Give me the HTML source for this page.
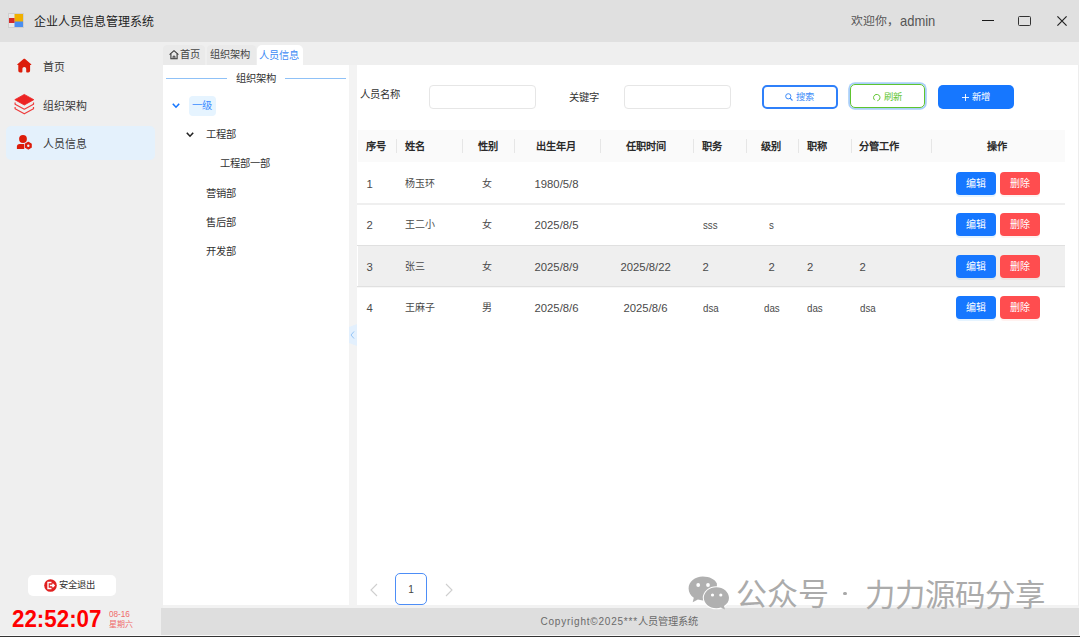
<!DOCTYPE html>
<html lang="zh-CN"><head><meta charset="utf-8">
<style>
*{box-sizing:border-box;margin:0;padding:0}
html,body{width:1080px;height:637px;overflow:hidden}
body{position:relative;background:#efefef;font-family:"Liberation Sans",sans-serif;color:#333}
.a{position:absolute;white-space:nowrap}
#title{left:0;top:0;width:1080px;height:42px;background:#e0e0e0}
.t{line-height:1}
/* nav */
.nav{font-size:10.9px;color:#3a3a3a}
/* tabs */
.tab{top:45px;height:19.5px;background:#eaeaea;border-radius:4px 4px 0 0;font-size:10.2px;color:#444;line-height:19px}
.panel{background:#fff}
.th{font-size:10.2px;font-weight:bold;color:#2a2a2a;top:140.7px;line-height:12px}
.sep{top:139px;width:1px;height:13.5px;background:#e6e6e6}
.td{font-size:11.3px;color:#4a4a4a;line-height:12px}
.td i{font-style:normal;font-size:10px;position:relative;top:-0.7px}
.hline{height:1px;background:#ececec;left:357px;width:708px}
.btn{width:39.5px;height:23px;border-radius:4px;color:#fff;font-size:10px;line-height:23px;text-align:center}
.be{background:#1677ff;left:956px;box-shadow:0 2px 0 rgba(5,145,255,0.1)}
.bd{background:#ff4d4f;left:1000px;box-shadow:0 2px 0 rgba(255,38,5,0.06)}
.tree{font-size:10.3px;color:#333;line-height:12px}
</style></head><body>
<!-- title bar -->
<div class="a" id="title"></div>
<svg class="a" style="left:8px;top:13px" width="16" height="15" viewBox="0 0 16 15">
  <rect x="0.5" y="0.5" width="15" height="14" fill="#e8e8e8" stroke="#cfcfcf" stroke-width="1"/>
  <rect x="6.5" y="1" width="8.5" height="8" fill="#f0b000"/>
  <rect x="6.5" y="8.5" width="8.5" height="5.5" fill="#4a8ef0"/>
  <rect x="1" y="5" width="5.5" height="5" fill="#d42a2a"/>
</svg>
<div class="a t" style="left:34px;top:16px;font-size:12px;color:#222">企业人员信息管理系统</div>
<div class="a t" style="left:850.5px;top:16px;font-size:11.9px;color:#555">欢迎你，</div><div class="a t" style="left:899.5px;top:13.6px;font-size:14.4px;color:#555;transform:scaleX(0.9);transform-origin:0 0">admin</div>
<div class="a" style="left:981.7px;top:19.9px;width:12.2px;height:1.3px;background:#1a1a1a"></div>
<div class="a" style="left:1018.3px;top:15.7px;width:12.6px;height:10.3px;border:1.3px solid #333;border-radius:1.5px"></div>
<svg class="a" style="left:1056.5px;top:16px" width="10" height="10" viewBox="0 0 10 10"><path d="M0.4 0.4L9.6 9.6M9.6 0.4L0.4 9.6" stroke="#222" stroke-width="1.2"/></svg>

<!-- sidebar nav -->
<div class="a" style="left:6px;top:126px;width:149px;height:33.5px;background:#e4f1fc;border-radius:5px"></div>
<svg class="a" style="left:12px;top:54px" width="26" height="24" viewBox="0 0 26 24"><path d="M12.3 4.7C12.6 4.7 12.9 4.8 13.1 5L19.2 10.3C19.5 10.6 19.3 11 18.9 11H18.1V16.6C18.1 17.8 17.4 18.5 16.3 18.5H15.3C14.6 18.5 14.2 18.1 14.2 17.4V15.1C14.2 13.9 13.4 13.1 12.3 13.1C11.2 13.1 10.4 13.9 10.4 15.1V17.4C10.4 18.1 10 18.5 9.3 18.5H8.1C7 18.5 6.3 17.8 6.3 16.6V11H5.7C5.3 11 5.1 10.6 5.4 10.3L11.5 5C11.7 4.8 12 4.7 12.3 4.7Z" fill="#dc1d0b"/></svg>
<div class="a t nav" style="left:42.5px;top:61.7px">首页</div>
<svg class="a" style="left:12px;top:90px" width="26" height="28" viewBox="0 0 26 28"><path d="M12.3 4.4L21.8 9.7L12.3 15L2.8 9.7Z" fill="#ec2323" stroke="#ec2323" stroke-width="0.8" stroke-linejoin="round"/><path d="M3.1 12.4V14.2L12.3 19.2L21.5 14.2V12.4" fill="none" stroke="#ee3b3b" stroke-width="1.2" stroke-linejoin="round"/><path d="M3.1 17V18.8L12.3 23.8L21.5 18.8V17" fill="none" stroke="#ee3b3b" stroke-width="1.2" stroke-linejoin="round"/></svg>
<div class="a t nav" style="left:42.5px;top:100.7px">组织架构</div>
<svg class="a" style="left:12px;top:130px" width="26" height="25" viewBox="0 0 26 25"><circle cx="11" cy="9" r="3.9" fill="#dc1d0b"/><path d="M4.9 19V16.6C4.9 15 6 14.1 7.6 14.1H12.2V19Z" fill="#dc1d0b"/><path d="M16.3 12.3L19.2 14V17.4L16.3 19.1L13.4 17.4V14Z" fill="#dc1d0b" stroke="#dc1d0b" stroke-width="1.1" stroke-linejoin="round"/><circle cx="16.3" cy="15.7" r="1.2" fill="#e6f2fd"/></svg>
<div class="a t nav" style="left:42.5px;top:138.7px">人员信息</div>

<!-- logout & clock -->
<div class="a" style="left:28px;top:575px;width:88px;height:21px;background:#fff;border-radius:5px"></div>
<svg class="a" style="left:44px;top:579px" width="13" height="13" viewBox="0 0 13 13"><circle cx="6.5" cy="6.5" r="6.3" fill="#e02020"/><path d="M7.5 3.5H4V9.5H7.5" fill="none" stroke="#fff" stroke-width="1.4"/><path d="M5.8 6.5H10M8.5 4.8L10.2 6.5L8.5 8.2" fill="none" stroke="#fff" stroke-width="1.3"/></svg>
<div class="a t" style="left:58.7px;top:581.3px;font-size:9.3px;color:#333">安全退出</div>
<div class="a t" style="left:12px;top:607px;font-size:24.3px;font-weight:bold;color:#ff0000;transform:scaleX(0.92);transform-origin:0 0">22:52:07</div>
<div class="a t" style="left:109px;top:610.3px;font-size:8.8px;color:#f06a6a;transform:scaleX(0.93);transform-origin:0 0">08-16</div>
<div class="a t" style="left:109px;top:621px;font-size:8px;color:#f06a6a">星期六</div>

<!-- tabs -->
<div class="a tab" style="left:163px;width:41.5px;padding-left:17px">首页</div><svg class="a" style="left:168.8px;top:50px" width="10" height="9.5" viewBox="0 0 10 9.5"><path d="M0.6 4.6L5 0.7L9.4 4.6" fill="none" stroke="#3a3a3a" stroke-width="1.1" stroke-linejoin="round"/><path d="M1.9 3.8V8.8H8.1V3.8" fill="none" stroke="#3a3a3a" stroke-width="1.1"/><path d="M4.1 8.8V6.2H5.9V8.8" fill="none" stroke="#3a3a3a" stroke-width="1"/></svg>
<div class="a tab" style="left:206.5px;width:49px;padding-left:3.5px">组织架构</div>
<div class="a tab" style="left:256.5px;width:46.5px;background:#fff;padding-left:2.2px;color:#3f8cf5;font-size:10.2px;border-radius:5px 5px 0 0"><span style="position:relative;top:0.6px">人员信息</span></div>

<!-- panels -->
<div class="a panel" style="left:163px;top:64.5px;width:186px;height:540.5px"></div>
<div class="a" style="left:349px;top:64.5px;width:8px;height:540.5px;background:#f3f3f3"></div>
<div class="a" style="left:349px;top:324px;width:8px;height:22px;background:#e3f0fd;clip-path:polygon(0 3px,100% 0,100% 100%,0 calc(100% - 3px))"></div>
<svg class="a" style="left:350.3px;top:331px" width="5" height="8" viewBox="0 0 5 8"><path d="M4 0.5L1 4L4 7.5" fill="none" stroke="#8cc0f5" stroke-width="0.9"/></svg>
<div class="a panel" style="left:357px;top:64.5px;width:721px;height:540.5px"></div>

<!-- tree -->
<div class="a" style="left:166px;top:78px;width:61px;height:1px;background:#8fc1f7"></div>
<div class="a" style="left:285px;top:78px;width:61px;height:1px;background:#8fc1f7"></div>
<div class="a t tree" style="left:236px;top:72.5px">组织架构</div>
<svg class="a" style="left:172px;top:102.5px" width="8" height="6" viewBox="0 0 8 6"><path d="M0.8 0.8L4 4.2L7.2 0.8" fill="none" stroke="#1677ff" stroke-width="1.6"/></svg>
<div class="a" style="left:189px;top:95.5px;width:27px;height:20px;background:#e6f4ff;border-radius:4px"></div>
<div class="a t tree" style="left:192px;top:100px;color:#3b8cff">一级</div>
<svg class="a" style="left:186px;top:131.5px" width="8" height="6" viewBox="0 0 8 6"><path d="M0.8 0.8L4 4.2L7.2 0.8" fill="none" stroke="#222" stroke-width="1.6"/></svg>
<div class="a t tree" style="left:206px;top:128.5px">工程部</div>
<div class="a t tree" style="left:220px;top:157.5px">工程部一部</div>
<div class="a t tree" style="left:206px;top:187.5px">营销部</div>
<div class="a t tree" style="left:206px;top:216.5px">售后部</div>
<div class="a t tree" style="left:206px;top:245.5px">开发部</div>

<!-- search form -->
<div class="a t" style="left:360px;top:90px;font-size:10.3px;color:#333">人员名称</div>
<div class="a" style="left:428.5px;top:85px;width:107px;height:23.5px;border:1px solid #e6e6e6;border-radius:4px"></div>
<div class="a t" style="left:569px;top:92.5px;font-size:10.3px;color:#333">关键字</div>
<div class="a" style="left:624px;top:85px;width:107px;height:23.5px;border:1px solid #e6e6e6;border-radius:4px"></div>
<div class="a" style="left:762px;top:84.7px;width:75.5px;height:24.2px;border:2px solid #2f80fa;border-radius:5px"></div><svg class="a" style="left:785px;top:93.3px" width="8" height="8" viewBox="0 0 8 8"><circle cx="3.3" cy="3.3" r="2.6" fill="none" stroke="#3d8bf8" stroke-width="1"/><path d="M5.1 5.1L7.5 7.5" stroke="#3d8bf8" stroke-width="1.1"/></svg><div class="a t" style="left:795.8px;top:93.2px;font-size:9.3px;color:#3d8bf8">搜索</div>
<div class="a" style="left:849.7px;top:84.4px;width:75.5px;height:23.8px;border:1.8px solid #5ec42f;border-radius:5px;box-shadow:0 0 0 1.8px #a9cff9"></div><svg class="a" style="left:872.7px;top:94.3px" width="8" height="8" viewBox="0 0 8 8"><path d="M1.9 6.2A3.2 3.2 0 1 1 4.3 6.75" fill="none" stroke="#5ec42f" stroke-width="1"/></svg><div class="a t" style="left:883.5px;top:93.2px;font-size:9.3px;color:#5ec42f">刷新</div>
<div class="a" style="left:938px;top:84.5px;width:76px;height:24.5px;background:#1677ff;border-radius:5px"></div><svg class="a" style="left:961.5px;top:93.5px" width="7" height="7" viewBox="0 0 7 7"><path d="M3.5 0V7M0 3.5H7" stroke="#fff" stroke-width="0.9"/></svg><div class="a t" style="left:971.8px;top:93.2px;font-size:9.3px;color:#fff">新增</div>

<!-- table -->
<div class="a" style="left:357.5px;top:130px;width:707.5px;height:32px;background:#fafafa"></div>
<div class="a th" style="left:366px">序号</div>
<div class="a sep" style="left:396px"></div>
<div class="a th" style="left:404.5px">姓名</div>
<div class="a sep" style="left:462px"></div>
<div class="a th" style="left:477.5px">性别</div>
<div class="a sep" style="left:514px"></div>
<div class="a th" style="left:535.5px">出生年月</div>
<div class="a sep" style="left:599.5px"></div>
<div class="a th" style="left:626px">任职时间</div>
<div class="a sep" style="left:693px"></div>
<div class="a th" style="left:702px">职务</div>
<div class="a sep" style="left:746px"></div>
<div class="a th" style="left:761px">级别</div>
<div class="a sep" style="left:798px"></div>
<div class="a th" style="left:806.5px">职称</div>
<div class="a sep" style="left:850.5px"></div>
<div class="a th" style="left:858.5px">分管工作</div>
<div class="a sep" style="left:930.5px"></div>
<div class="a th" style="left:987px">操作</div>

<div class="a" style="left:357.5px;top:246px;width:707.5px;height:40px;background:#efefef"></div>
<div class="a hline" style="top:203px;height:2px;background:#efefef"></div>
<div class="a hline" style="top:245px;background:#e0e0e0"></div>
<div class="a hline" style="top:286px;background:#e0e0e0"></div><div class="a hline" style="top:287px;background:#f7f7f7"></div>

<!-- row1 -->
<div class="a td" style="left:366.5px;top:177.5px">1</div>
<div class="a td" style="left:404.5px;top:177.5px"><i>杨玉环</i></div>
<div class="a td" style="left:482px;top:177.5px"><i>女</i></div>
<div class="a td" style="left:534.5px;top:177.5px">1980/5/8</div>
<div class="a btn be" style="top:171.5px">编辑</div>
<div class="a btn bd" style="top:171.5px">删除</div>
<!-- row2 -->
<div class="a td" style="left:366.5px;top:219px">2</div>
<div class="a td" style="left:404.5px;top:219px"><i>王二小</i></div>
<div class="a td" style="left:482px;top:219px"><i>女</i></div>
<div class="a td" style="left:534.5px;top:219px">2025/8/5</div>
<div class="a td" style="left:702.5px;top:219px"><span style="display:inline-block;transform:scaleX(0.86);transform-origin:0 0">sss</span></div>
<div class="a td" style="left:769px;top:219px"><span style="display:inline-block;transform:scaleX(0.86);transform-origin:0 0">s</span></div>
<div class="a btn be" style="top:213px">编辑</div>
<div class="a btn bd" style="top:213px">删除</div>
<!-- row3 -->
<div class="a td" style="left:366.5px;top:260.5px">3</div>
<div class="a td" style="left:404.5px;top:260.5px"><i>张三</i></div>
<div class="a td" style="left:482px;top:260.5px"><i>女</i></div>
<div class="a td" style="left:534.5px;top:260.5px">2025/8/9</div>
<div class="a td" style="left:620.5px;top:260.5px">2025/8/22</div>
<div class="a td" style="left:702.5px;top:260.5px">2</div>
<div class="a td" style="left:768.5px;top:260.5px">2</div>
<div class="a td" style="left:807px;top:260.5px">2</div>
<div class="a td" style="left:859.5px;top:260.5px">2</div>
<div class="a btn be" style="top:254.5px">编辑</div>
<div class="a btn bd" style="top:254.5px">删除</div>
<!-- row4 -->
<div class="a td" style="left:366.5px;top:302px">4</div>
<div class="a td" style="left:404.5px;top:302px"><i>王麻子</i></div>
<div class="a td" style="left:482px;top:302px"><i>男</i></div>
<div class="a td" style="left:534.5px;top:302px">2025/8/6</div>
<div class="a td" style="left:623.5px;top:302px">2025/8/6</div>
<div class="a td" style="left:702.5px;top:302px"><span style="display:inline-block;transform:scaleX(0.86);transform-origin:0 0">dsa</span></div>
<div class="a td" style="left:763.5px;top:302px"><span style="display:inline-block;transform:scaleX(0.86);transform-origin:0 0">das</span></div>
<div class="a td" style="left:807px;top:302px"><span style="display:inline-block;transform:scaleX(0.86);transform-origin:0 0">das</span></div>
<div class="a td" style="left:859.5px;top:302px"><span style="display:inline-block;transform:scaleX(0.86);transform-origin:0 0">dsa</span></div>
<div class="a btn be" style="top:296px">编辑</div>
<div class="a btn bd" style="top:296px">删除</div>

<!-- pagination -->
<svg class="a" style="left:369.5px;top:582.5px" width="8" height="14" viewBox="0 0 8 14"><path d="M7 1L1 7L7 13" fill="none" stroke="#cfcfcf" stroke-width="1.1"/></svg>
<div class="a" style="left:395px;top:572.5px;width:32px;height:32.5px;border:1.5px solid #4d8ef7;border-radius:5px;font-size:10px;color:#333;line-height:31px;text-align:center;color:#444">1</div>
<svg class="a" style="left:444.5px;top:582.5px" width="8" height="14" viewBox="0 0 8 14"><path d="M1 1L7 7L1 13" fill="none" stroke="#cfcfcf" stroke-width="1.1"/></svg>

<!-- footer -->
<div class="a" style="left:163px;top:605px;width:917px;height:3px;background:#f2f2f2"></div>
<div class="a" style="left:1078px;top:64.5px;width:1px;height:541px;background:#ededed"></div>
<div class="a" style="left:161px;top:608px;width:919px;height:27px;background:#dedede"></div>
<div class="a t" style="left:540.5px;top:617.3px;font-size:10px;color:#6a6a6a"><span style="letter-spacing:0.78px">Copyright©2025***</span><span style="font-size:10.2px">人员管理系统</span></div>
<div class="a" style="left:0;top:635px;width:1080px;height:1px;background:#fafafa"></div>
<div class="a" style="left:0;top:636px;width:1080px;height:1px;background:#333"></div>

<!-- watermark -->
<svg class="a" style="left:682px;top:570px" width="55" height="42" viewBox="0 0 55 42">
  <path d="M20.8 6.5C12.9 6.5 6.6 11.9 6.6 18.5C6.6 22.3 8.6 25.6 11.8 27.8L10.7 32.3L15.9 29.6C17.4 30.1 19.1 30.4 20.8 30.4C27.9 30.4 33.8 26.1 34.9 20.5C34.9 20.5 34.9 13.5 34.9 13.4C33 9.3 27.4 6.5 20.8 6.5Z" fill="#b0b0b0"/>
  <ellipse cx="34.4" cy="27.8" rx="13.6" ry="11.5" fill="#fff"/>
  <circle cx="16.2" cy="15" r="1.9" fill="#fff"/><circle cx="26" cy="15" r="1.9" fill="#fff"/>
  <path d="M34.4 17.3C27.5 17.3 21.8 22 21.8 27.8C21.8 33.6 27.5 38.3 34.4 38.3C36 38.3 37.5 38 38.9 37.6L43 39.6L42 36C45.2 34.1 47 31.1 47 27.8C47 22 41.3 17.3 34.4 17.3Z" fill="#b0b0b0"/>
  <circle cx="30.5" cy="25" r="1.6" fill="#fff"/><circle cx="38.8" cy="25" r="1.6" fill="#fff"/>
</svg>
<div class="a t" style="left:735.5px;top:579px;font-size:31px;color:#ababab">公众号</div>
<div class="a" style="left:843.1px;top:591.8px;width:3.6px;height:3.6px;border-radius:50%;background:#a8a8a8"></div>
<div class="a t" style="left:864.5px;top:579.5px;font-size:30.4px;color:#ababab">力力源码分享</div>
<div class="a" style="left:1079px;top:0;width:1px;height:635px;background:#fff"></div>
</body></html>
